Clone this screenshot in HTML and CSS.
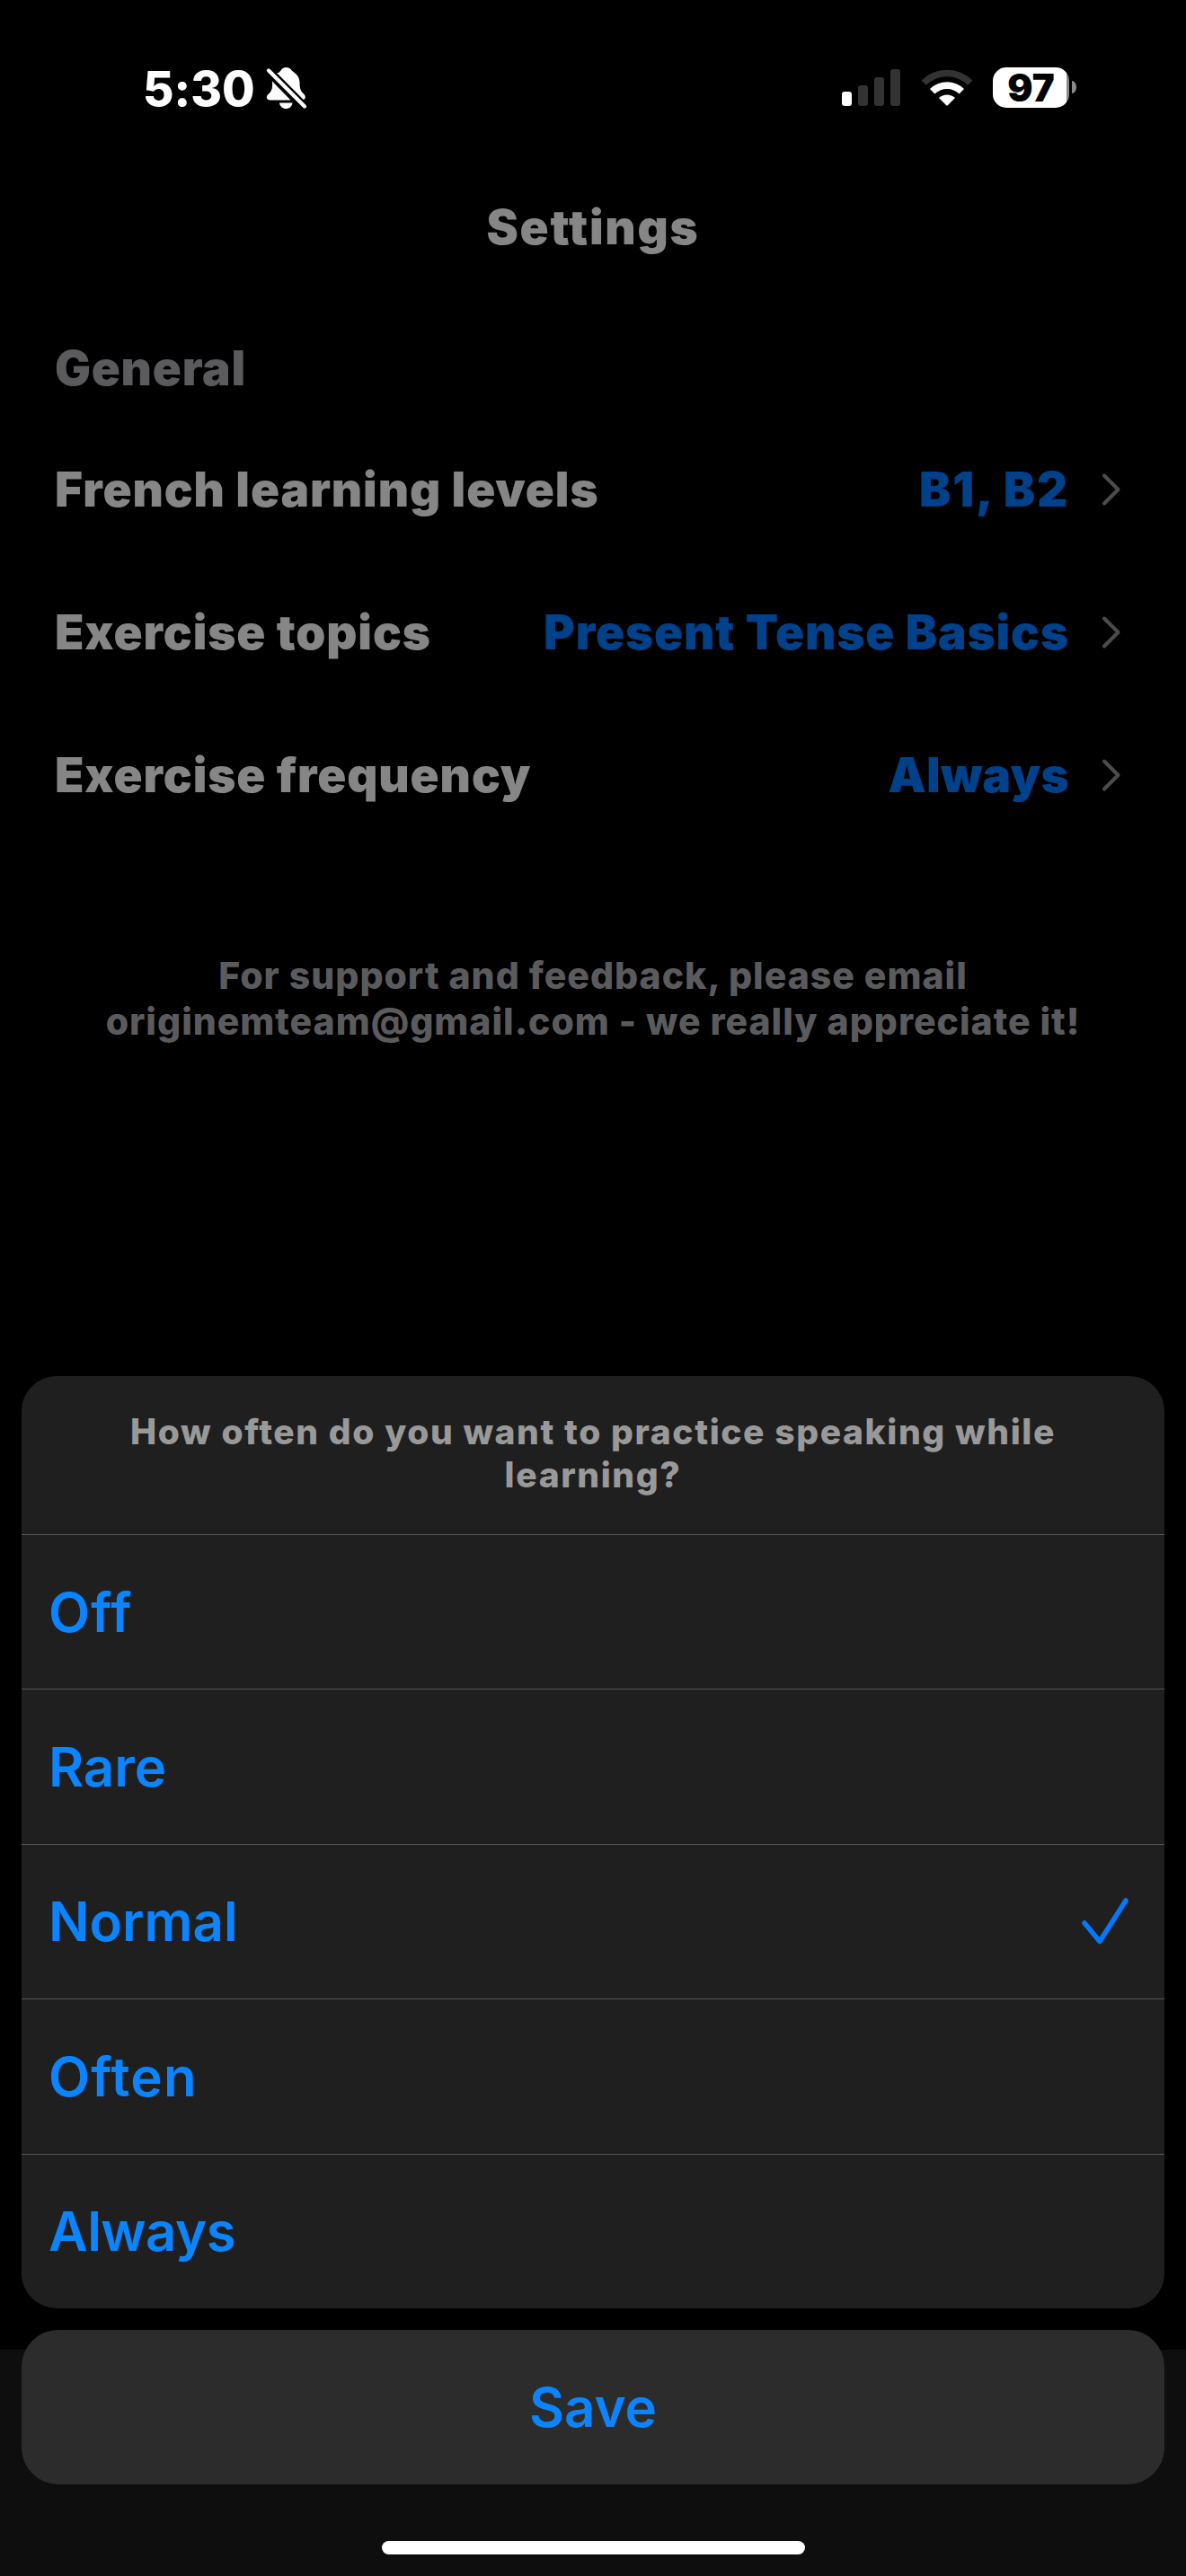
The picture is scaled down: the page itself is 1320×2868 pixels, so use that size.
FILE: index.html
```
<!DOCTYPE html>
<html lang="en">
<head>
<meta charset="utf-8">
<title>Settings</title>
<link rel="stylesheet" href="styles.css">
</head>
<body>
<div class="screen">
  <div class="status">
    <div class="status-left">
      <span class="time">5:30</span>
      <svg class="bell" width="46" height="48" viewBox="0 0 46 48">
        <g fill="#fff">
          <path d="M14 7C17 5 17.500 1 22.500 1C27 1 28 4 30.500 6C35 9 37.500 13 37.500 18C37.500 25 39 28 42.500 31C44.500 33.500 44 36 42 37L38 37L8.500 8Z"/>
          <path d="M6.500 16L27.500 37.500L5 37.500C0 37.500 0 33 2.500 31C6 28 7.500 25 7 17Z"/>
          <path d="M15 40.500H29.500C29 44.500 26 47 22.300 47S15.500 44.500 15 40.500Z"/>
        </g>
        <path d="M3 4.500L43 44.500" stroke="#000" stroke-width="9"/>
        <path d="M3 4.500L43 44.500" stroke="#fff" stroke-width="4.200" stroke-linecap="round"/>
      </svg>
    </div>
    <div class="status-right">
      <svg class="signal" width="65" height="42" viewBox="0 0 65 42">
        <rect x="0" y="26" width="11" height="16" rx="3.200" fill="#fff"/>
        <g fill="#333">
          <rect x="18" y="19" width="11" height="23" rx="3.200"/>
          <rect x="36" y="10" width="11" height="32" rx="3.200"/>
          <rect x="54" y="1" width="11" height="41" rx="3.200"/>
        </g>
      </svg>
      <svg class="wifi" width="58" height="43" viewBox="0 0 58 43">
        <path d="M0.500 13.500A40.500 40.500 0 0 1 57.500 13.500L52.200 18.700A33 33 0 0 0 5.800 18.700Z" fill="#333"/>
        <path d="M10 23A27 27 0 0 1 48 23L42.600 28.500A19.500 19.500 0 0 0 15.400 28.500Z" fill="#fff"/>
        <path d="M20 33A13 13 0 0 1 38 33L30 41Q29 42 28 41Z" fill="#fff"/>
      </svg>
      <div class="battery"><span>97</span></div>
      <div class="battery-tip"></div>
    </div>
  </div>
  <h1 class="title">Settings</h1>
  <h2 class="section">General</h2>
  <div class="row">
    <span class="label">French learning levels</span>
    <span class="value value-levels">B1, B2</span>
    <svg class="chev" width="22" height="38" viewBox="0 0 22 38"><path d="M3 3.500L18.500 19L3 34.500"/></svg>
  </div>
  <div class="row">
    <span class="label">Exercise topics</span>
    <span class="value">Present Tense Basics</span>
    <svg class="chev" width="22" height="38" viewBox="0 0 22 38"><path d="M3 3.500L18.500 19L3 34.500"/></svg>
  </div>
  <div class="row">
    <span class="label">Exercise frequency</span>
    <span class="value value-frequency">Always</span>
    <svg class="chev" width="22" height="38" viewBox="0 0 22 38"><path d="M3 3.500L18.500 19L3 34.500"/></svg>
  </div>
  <p class="support">For support and feedback, please email<br>originemteam@gmail.com - we really appreciate it!</p>
  <div class="tabbar"></div>
  <div class="sheet">
    <div class="menu">
      <p class="question">How often do you want to practice speaking while<br>learning?</p>
      <div class="option"><span class="wide">Off</span></div>
      <div class="option"><span>Rare</span></div>
      <div class="option"><span>Normal</span><svg class="check" width="54" height="54" viewBox="0 0 54 54"><path d="M4 29L21 49.500L50 4"/></svg></div>
      <div class="option"><span class="wide">Often</span></div>
      <div class="option"><span class="tight">Always</span></div>
    </div>
    <button class="save">Save</button>
    <div class="home"></div>
  </div>
</div>
</body>
</html>
```
FILE: styles.css
```
* { box-sizing: border-box; margin: 0; padding: 0; }
body { background: #000; font-family: Inter, "Liberation Sans", sans-serif; font-variant-ligatures: none; }
.screen { position: relative; width: 1320px; height: 2868px; overflow: hidden; background: #000; }

.status { display: flex; justify-content: space-between; align-items: center; height: 194px; padding: 0 122px 0 159px; }
.status-left, .status-right { display: flex; align-items: center; }
.time { padding-top: 3px; color: #fff; font-size: 53px; font-weight: 800; line-height: 64px; }
.bell { margin-left: 12px; position: relative; top: 1px; }
.signal { margin-right: 23px; }
.wifi { margin-right: 22px; }
.battery { display: flex; align-items: center; justify-content: center; width: 85px; height: 45px; border-radius: 15px; background: linear-gradient(to right, #fff 82px, #8a8a8a 82px); color: #000; font-size: 42px; font-weight: 900; }
.battery-tip { width: 5px; height: 14px; margin-left: 3px; border-radius: 0 5px 5px 0 / 0 7px 7px 0; background: #8a8a8a; }

.title { height: 118px; line-height: 118px; text-align: center; color: #868686; font-size: 53px; font-weight: 900; letter-spacing: 1.72px; }
.section { height: 110px; margin-top: 43px; padding-left: 61px; line-height: 110px; color: #5b5b5d; font-size: 53px; font-weight: 900; letter-spacing: 0.75px; }
.row { display: flex; align-items: center; height: 159px; padding: 0 72px 0 61px; color: #868686; font-size: 53px; font-weight: 900; letter-spacing: 0.88px; }
.value { margin-left: auto; color: #00418a; }
.value-levels { letter-spacing: 1.77px; }
.value-frequency { letter-spacing: 0.35px; }
.chev { margin-left: 36px; fill: none; stroke: #4c4c4c; stroke-width: 4; stroke-linecap: round; stroke-linejoin: round; }
.support { margin-top: 119px; text-align: center; color: #5b5b5d; font-size: 41px; font-weight: 800; line-height: 51px; letter-spacing: 0.98px; }

.tabbar { position: absolute; left: 0; right: 0; bottom: 0; height: 252px; background: #0e0e0e; }
.sheet { position: absolute; left: 0; right: 0; bottom: 0; display: flex; flex-direction: column; align-items: center; padding: 0 24px 24px; }
.menu { width: 100%; height: 1038px; border-radius: 39px; overflow: hidden; background: #1f1f1f; }
.question { height: 176px; padding-top: 38px; text-align: center; color: #999; font-size: 39px; font-weight: 800; line-height: 48px; letter-spacing: 1.6px; }
.option { display: flex; align-items: center; justify-content: space-between; height: 172.4px; padding: 0 39px 0 30px; border-top: 1px solid #555; color: #0a84ff; font-size: 60px; font-weight: 600; }
.option .wide { letter-spacing: 1.2px; }
.option .tight { letter-spacing: -0.5px; }
.check { fill: none; stroke: #007aff; stroke-width: 5.5; stroke-linecap: round; stroke-linejoin: round; }
.save { width: 100%; height: 172px; margin-top: 24px; border: 0; border-radius: 41px; background: #2c2c2c; color: #0a84ff; font: 600 60px Inter, "Liberation Sans", sans-serif; }
.home { width: 471px; height: 15px; margin-top: 63px; border-radius: 8px; background: #fff; }
```
